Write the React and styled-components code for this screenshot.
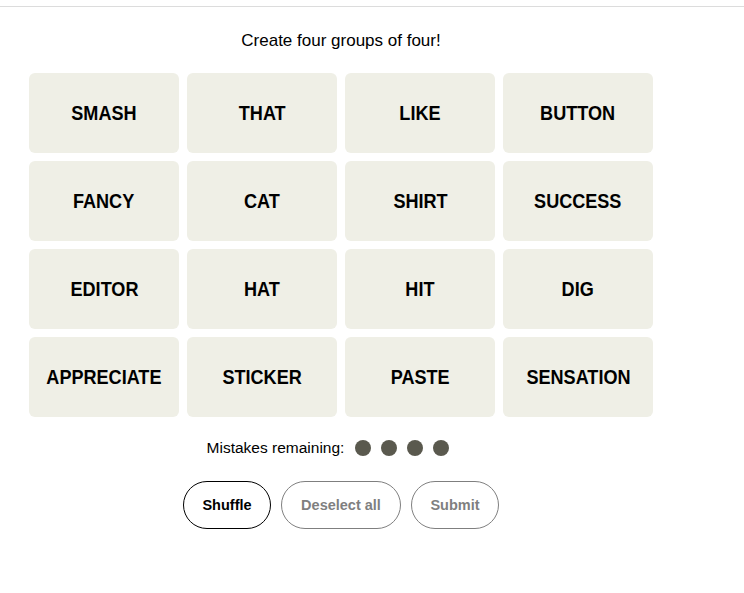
import React from 'react';
import styled, {createGlobalStyle} from 'styled-components';

const GlobalStyle = createGlobalStyle`
    body {
        margin: 0;
        background: #fff;
        font-family: "Liberation Sans", Arial, sans-serif;
    }
`

const TopBar = styled.div`
    height: 6px;
    border-bottom: 1px solid #dcdcdc;
`

const Board = styled.div`
    width: 624px;
    margin-left: 29px;
    display: flex;
    flex-direction: column;
    align-items: center;
`

const Prompt = styled.p`
    margin: 24px 0 0;
    height: 20px;
    font-size: 17px;
    line-height: 20px;
    color: #000;
`

const Grid = styled.div`
    margin-top: 22px;
    display: grid;
    grid-template-columns: repeat(4, 150px);
    grid-auto-rows: 80px;
    gap: 8px;
`

const Tile = styled.div`
    background: #efefe6;
    border-radius: 6px;
    display: flex;
    align-items: center;
    justify-content: center;
    color: #000;
`

// condensed look: no narrow face installed, so squeeze the bold sans
const Word = styled.span`
    display: inline-block;
    font-weight: 700;
    font-size: 21px;
    text-transform: uppercase;
    transform: scaleX(0.86);
    white-space: nowrap;
`

const Mistakes = styled.div`
    margin-top: 21px;
    margin-right: 26px;
    display: flex;
    align-items: center;
    gap: 11px;
    font-size: 15.5px;
    color: #000;
    height: 20px;
`

const Dots = styled.div`
    display: flex;
    gap: 10px;
`

const Dot = styled.span`
    width: 16px;
    height: 16px;
    border-radius: 50%;
    background: #5a594e;
`

const Actions = styled.div`
    margin-top: 23px;
    display: flex;
    gap: 10px;
`

const Pill = styled.button`
    width: ${p => p.w}px;
    height: 48px;
    border-radius: 24px;
    background: #fff;
    border: 1px solid ${p => p.active ? '#000' : '#7f7f7f'};
    color: ${p => p.active ? '#000' : '#7f7f7f'};
    font-family: "Liberation Sans", Arial, sans-serif;
    font-weight: 700;
    font-size: 14.5px;
    padding: 0;
`

const words = [
    'Smash', 'That', 'Like', 'Button',
    'Fancy', 'Cat', 'Shirt', 'Success',
    'Editor', 'Hat', 'Hit', 'Dig',
    'Appreciate', 'Sticker', 'Paste', 'Sensation',
]

const App = () => {
    return (
        <>
            <GlobalStyle/>
            <TopBar/>
            <Board>
                <Prompt>Create four groups of four!</Prompt>
                <Grid>
                    {words.map(w => <Tile key={w}><Word>{w}</Word></Tile>)}
                </Grid>
                <Mistakes>
                    Mistakes remaining:
                    <Dots>
                        <Dot/><Dot/><Dot/><Dot/>
                    </Dots>
                </Mistakes>
                <Actions>
                    <Pill w={88} active>Shuffle</Pill>
                    <Pill w={120}>Deselect all</Pill>
                    <Pill w={88}>Submit</Pill>
                </Actions>
            </Board>
        </>
    )
}

export default App;
